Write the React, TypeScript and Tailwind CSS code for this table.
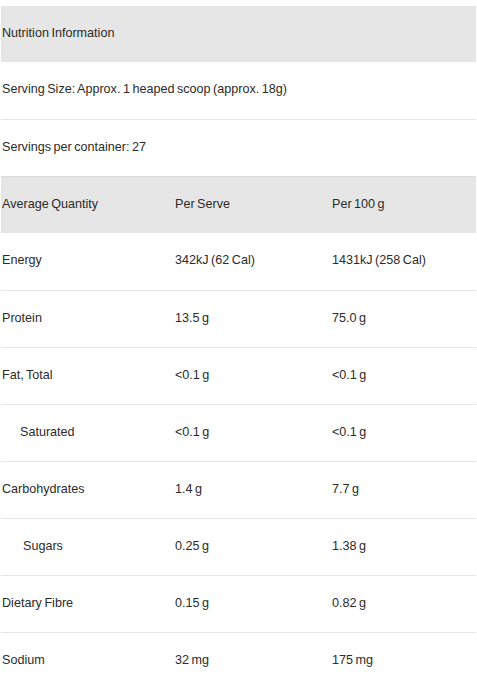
const rows: [string, string, string, number][] = [
  ["Energy", "342kJ (62 Cal)", "1431kJ (258 Cal)", 0],
  ["Protein", "13.5 g", "75.0 g", 0],
  ["Fat, Total", "<0.1 g", "<0.1 g", 0],
  ["Saturated", "<0.1 g", "<0.1 g", 1],
  ["Carbohydrates", "1.4 g", "7.7 g", 0],
  ["Sugars", "0.25 g", "1.38 g", 2],
  ["Dietary Fibre", "0.15 g", "0.82 g", 0],
  ["Sodium", "32 mg", "175 mg", 0],
];

export default function App() {
  return (
    <div
      className="bg-white pt-[6px] px-px text-[12.6px] text-[#2b2b2b] [word-spacing:-1px]"
      style={{ fontFamily: '"Liberation Sans", Arial, sans-serif' }}
    >
      <table className="w-full border-collapse">
        <tbody>
          <tr className="h-[56px] bg-[#e6e6e6]">
            <td colSpan={3} className="px-px pb-px">Nutrition Information</td>
          </tr>
          <tr className="h-[57px] border-b border-[#e6e6e6]">
            <td colSpan={3} className="px-px pb-px">Serving Size: Approx. 1 heaped scoop (approx. 18g)</td>
          </tr>
          <tr className="h-[57px] border-b border-[#dcdcdc]">
            <td colSpan={3} className="px-px pb-px">Servings per container: 27</td>
          </tr>
          <tr className="h-[57px] bg-[#e6e6e6]">
            <td className="px-px pb-px w-[173px]">Average Quantity</td>
            <td className="px-px pb-px w-[157px]">Per Serve</td>
            <td className="px-px pb-px">Per 100 g</td>
          </tr>
          {rows.map(([name, serve, per100, indent]) => (
            <tr key={name} className="h-[57px] border-b border-[#e6e6e6]">
              <td
                className={
                  "pb-px " +
                  (indent === 1 ? "pl-[19px]" : indent === 2 ? "pl-[22px]" : "px-px")
                }
              >
                {name}
              </td>
              <td className="px-px pb-px">{serve}</td>
              <td className="px-px pb-px">{per100}</td>
            </tr>
          ))}
        </tbody>
      </table>
    </div>
  );
}
